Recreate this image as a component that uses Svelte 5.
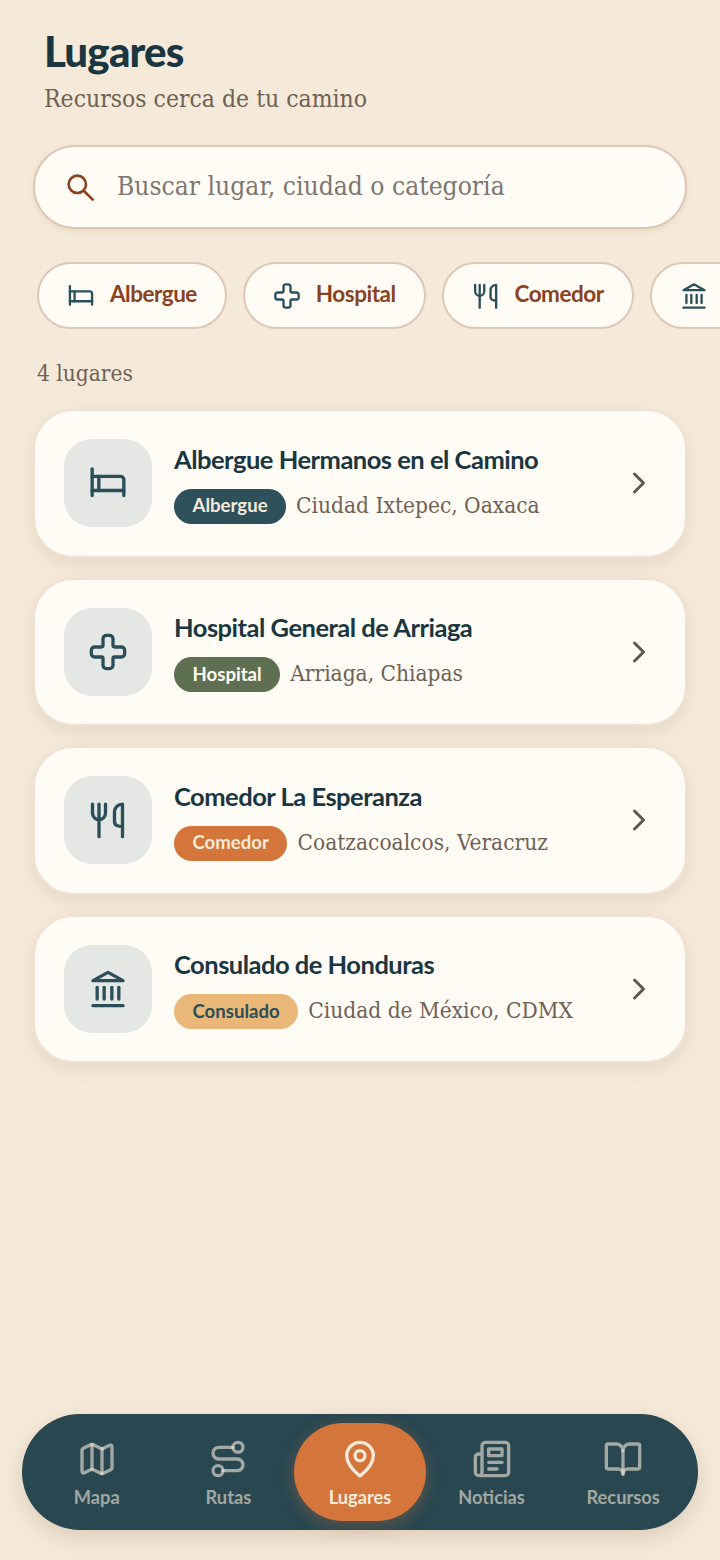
<script lang="ts">
	const icons: Record<string, string[]> = {
		bed: ['M2.500 3.500v16', 'M2.500 16.500h19', 'M21.500 19.500v-9.500a2 2 0 0 0-2-2H2.500', 'M6.500 8v8.500'],
		cross: ['M4 9a2 2 0 0 0-2 2v2a2 2 0 0 0 2 2h4a1 1 0 0 1 1 1v4a2 2 0 0 0 2 2h2a2 2 0 0 0 2-2v-4a1 1 0 0 1 1-1h4a2 2 0 0 0 2-2v-2a2 2 0 0 0-2-2h-4a1 1 0 0 1-1-1V4a2 2 0 0 0-2-2h-2a2 2 0 0 0-2 2v4a1 1 0 0 1-1 1z'],
		food: ['M2.700 2.500V8a3.900 3.900 0 0 0 7.800 0V2.500', 'M6.600 2.500V22', 'M20.700 16c-3 0-4.800-1-4.800-3V7c0-2.500 2.300-4.500 4.800-4.500V22'],
		bank: ['M3 7 12 2l9 5z', 'M5.500 11v7', 'M9.700 11v7', 'M14.300 11v7', 'M18.500 11v7', 'M3 22h18'],
		search: ['M3.500 10a6.500 6.500 0 1 0 13 0a6.500 6.500 0 1 0-13 0', 'm15 15 6.500 6.500'],
		chevron: ['m9 18 6-6-6-6'],
		map: ['M14.106 5.553a2 2 0 0 0 1.788 0l3.659-1.830A1 1 0 0 1 21 4.619v12.764a1 1 0 0 1-.553.894l-4.553 2.277a2 2 0 0 1-1.788 0l-4.212-2.106a2 2 0 0 0-1.788 0l-3.659 1.830A1 1 0 0 1 3 19.381V6.618a1 1 0 0 1 .553-.894l4.553-2.277a2 2 0 0 1 1.788 0z', 'M15 5.764v15', 'M9 3.236v15'],
		route: ['M3 19a3 3 0 1 0 6 0a3 3 0 1 0-6 0', 'M9 19h8.500a3.500 3.500 0 0 0 0-7h-11a3.500 3.500 0 0 1 0-7H15', 'M15 5a3 3 0 1 0 6 0a3 3 0 1 0-6 0'],
		pin: ['M20 10c0 4.993-5.539 10.193-7.399 11.799a1 1 0 0 1-1.202 0C9.539 20.193 4 14.993 4 10a8 8 0 0 1 16 0', 'M9 10a3 3 0 1 0 6 0a3 3 0 1 0-6 0'],
		news: ['M4 22h16a2 2 0 0 0 2-2V4a2 2 0 0 0-2-2H8a2 2 0 0 0-2 2v16a2 2 0 0 1-2 2Zm0 0a2 2 0 0 1-2-2v-9c0-1.100.9-2 2-2h2', 'M18 14h-8', 'M15 18h-5', 'M10 6h8v4h-8V6Z'],
		book: ['M12 7v14', 'M3 18a1 1 0 0 1-1-1V4a1 1 0 0 1 1-1h5a4 4 0 0 1 4 4 4 4 0 0 1 4-4h5a1 1 0 0 1 1 1v13a1 1 0 0 1-1 1h-6a3 3 0 0 0-3 3 3 3 0 0 0-3-3z']
	};

	const chips = [
		{ label: 'Albergue', icon: 'bed' },
		{ label: 'Hospital', icon: 'cross' },
		{ label: 'Comedor', icon: 'food' },
		{ label: 'Consulado', icon: 'bank' }
	];

	const places = [
		{ name: 'Albergue Hermanos en el Camino', tag: 'Albergue', kind: 'albergue', city: 'Ciudad Ixtepec, Oaxaca', icon: 'bed' },
		{ name: 'Hospital General de Arriaga', tag: 'Hospital', kind: 'hospital', city: 'Arriaga, Chiapas', icon: 'cross' },
		{ name: 'Comedor La Esperanza', tag: 'Comedor', kind: 'comedor', city: 'Coatzacoalcos, Veracruz', icon: 'food' },
		{ name: 'Consulado de Honduras', tag: 'Consulado', kind: 'consulado', city: 'Ciudad de México, CDMX', icon: 'bank' }
	];

	const tabs = [
		{ label: 'Mapa', icon: 'map' },
		{ label: 'Rutas', icon: 'route' },
		{ label: 'Lugares', icon: 'pin', active: true },
		{ label: 'Noticias', icon: 'news' },
		{ label: 'Recursos', icon: 'book' }
	];
</script>

{#snippet icon(name: string, size: number)}
	<svg viewBox="0 0 24 24" width={size} height={size} fill="none" stroke="currentColor" stroke-width="2" stroke-linecap="round" stroke-linejoin="round">
		{#each icons[name] as d}
			<path {d} />
		{/each}
	</svg>
{/snippet}

<div class="page">
	<main>
		<header>
			<h1>Lugares</h1>
			<p>Recursos cerca de tu camino</p>
		</header>

		<label class="search">
			<span class="search-icon">{@render icon('search', 32)}</span>
			<input type="text" placeholder="Buscar lugar, ciudad o categoría" />
		</label>

		<div class="chips">
			{#each chips as chip}
				<button class="chip">
					<span class="chip-icon">{@render icon(chip.icon, 28)}</span>
					<span class="chip-label">{chip.label}</span>
				</button>
			{/each}
		</div>

		<div class="count">4 lugares</div>

		<div class="list">
			{#each places as place}
				<article class="card">
					<div class="thumb">{@render icon(place.icon, 40)}</div>
					<div class="info">
						<h2>{place.name}</h2>
						<div class="meta">
							<span class="tag {place.kind}">{place.tag}</span>
							<span class="city">{place.city}</span>
						</div>
					</div>
					<span class="chevron">{@render icon('chevron', 36)}</span>
				</article>
			{/each}
		</div>
	</main>

	<nav>
		{#each tabs as tab}
			<div class="tab" class:active={tab.active}>
				{@render icon(tab.icon, 40)}
				<span>{tab.label}</span>
			</div>
		{/each}
	</nav>
</div>

<style>
	:global(body) {
		background: #f5ead9;
	}

	.page {
		height: 1560px;
		display: flex;
		flex-direction: column;
		overflow: hidden;
		font-family: 'DejaVu Serif Condensed', 'DejaVu Serif', serif;
	}

	main {
		flex: 1;
		min-height: 0;
	}

	header {
		padding: 29px 0 0 44px;
	}

	h1 {
		margin: 0;
		font-family: Lato, sans-serif;
		font-weight: 900;
		font-size: 42px;
		line-height: 44px;
		letter-spacing: -0.8px;
		color: #1a3640;
	}

	header p {
		margin: 8px 0 0;
		font-size: 24.500px;
		line-height: 36px;
		color: #6f6154;
	}

	.search {
		margin: 28px 33px 0;
		height: 84px;
		box-sizing: border-box;
		display: flex;
		align-items: center;
		gap: 21px;
		padding: 0 29px;
		background: #fffcf5;
		border: 2px solid #e0c6b6;
		border-radius: 42px;
		box-shadow: 0 2px 6px rgba(90, 50, 20, 0.1);
	}

	.search-icon {
		display: flex;
		color: #8a4222;
	}

	input {
		flex: 1;
		min-width: 0;
		padding: 0 0 2px;
		border: none;
		outline: none;
		background: none;
		font: inherit;
		font-size: 26.200px;
		color: #1a3640;
	}

	input::placeholder {
		color: #7b7670;
		opacity: 1;
	}

	.chips {
		display: flex;
		gap: 16px;
		margin-top: 33px;
		padding-left: 37px;
	}

	.chip {
		flex: none;
		height: 67px;
		box-sizing: border-box;
		display: flex;
		align-items: center;
		gap: 15px;
		padding: 0 28px;
		background: #fffcf5;
		border: 2px solid #e0c6b6;
		border-radius: 34px;
		font-family: Lato, sans-serif;
		font-weight: 700;
		font-size: 22.500px;
		letter-spacing: -0.5px;
		color: #8a4222;
	}

	.chip-icon {
		display: flex;
		color: #2a4f5a;
	}

	.chip-label {
		margin-top: -4px;
	}

	.count {
		margin: 26px 0 0 37px;
		font-size: 22.500px;
		line-height: 36px;
		color: #6f6154;
	}

	.list {
		display: flex;
		flex-direction: column;
		gap: 20px;
		margin: 18px 33px 0;
	}

	.card {
		height: 148.500px;
		box-sizing: border-box;
		display: flex;
		align-items: center;
		gap: 22px;
		padding: 0 28px 0 29px;
		background: #fffcf5;
		border: 2px solid #f1e0d5;
		border-radius: 40px;
		box-shadow: 0 6px 18px rgba(90, 50, 20, 0.1);
	}

	.thumb {
		flex: none;
		width: 88px;
		height: 88px;
		display: flex;
		align-items: center;
		justify-content: center;
		border-radius: 28px;
		background: #e4e7e3;
		color: #2a4f5a;
	}

	.info {
		flex: 1;
		min-width: 0;
	}

	h2 {
		margin: -1px 0 13px;
		font-family: Lato, sans-serif;
		font-weight: 700;
		font-size: 25.500px;
		line-height: 34px;
		letter-spacing: -0.5px;
		color: #1a3640;
	}

	.meta {
		display: flex;
		align-items: center;
		gap: 10px;
	}

	.tag {
		height: 35px;
		box-sizing: border-box;
		display: flex;
		align-items: center;
		padding: 0 18.500px 2px;
		border-radius: 18px;
		font-family: Lato, sans-serif;
		font-weight: 700;
		font-size: 18.600px;
		color: #f5ead9;
	}

	.tag.albergue {
		background: #2d505b;
	}

	.tag.hospital {
		background: #5f6f52;
		color: #fffcf5;
	}

	.tag.comedor {
		background: #d4763b;
	}

	.tag.consulado {
		background: #e9b777;
		color: #2a4f5a;
	}

	.city {
		margin-top: -3px;
		font-size: 22.500px;
		color: #6f6154;
	}

	.chevron {
		flex: none;
		display: flex;
		color: #5e5850;
	}

	nav {
		flex: none;
		margin: 0 22px 30px;
		height: 116px;
		box-sizing: border-box;
		display: flex;
		padding: 9px;
		border-radius: 58px;
		background: #284751;
		box-shadow: 0 8px 24px rgba(90, 50, 20, 0.16);
	}

	.tab {
		flex: 1;
		display: flex;
		flex-direction: column;
		align-items: center;
		gap: 6px;
		padding-top: 16px;
		border-radius: 49px;
		font-family: Lato, sans-serif;
		font-weight: 700;
		font-size: 18.300px;
		line-height: 24px;
		color: rgba(245, 234, 217, 0.6);
	}

	.tab.active {
		background: #d4763b;
		color: #f5ead9;
		box-shadow: 0 4px 16px rgba(212, 118, 59, 0.35);
	}
</style>
